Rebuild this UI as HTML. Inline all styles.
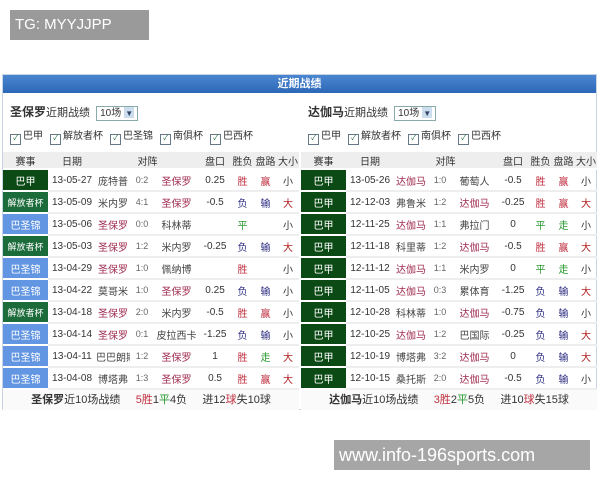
<!DOCTYPE html><html><head><meta charset="utf-8"><style>
*{margin:0;padding:0;box-sizing:border-box}
body{width:600px;height:480px;background:#fff;position:relative;overflow:hidden;font-family:"Liberation Sans","Noto Sans CJK SC",sans-serif;font-size:10px;color:#333}
.tg{position:absolute;left:10px;top:10px;width:139px;height:30px;background:#9a9a9a;color:#fff;font-size:15px;line-height:30px;padding-left:5px}
.wm{position:absolute;left:334px;top:440px;width:256px;height:30px;background:#a6a6a6;color:#fff;font-size:18px;line-height:30px;padding-left:5px}
.panel{position:absolute;left:2px;top:74px;width:595px;height:336px;border:1px solid #c8d4e4;background:#fff}
.bar{height:18px;background:linear-gradient(#4a86d0,#2d68b8);color:#fff;font-weight:bold;text-align:center;font-size:11px;line-height:18px}
.side{position:absolute;top:19px;width:296px}
.t1{height:31px;line-height:36px;padding-left:7px;font-size:11px}
.t1 b{font-size:12px}
.sel{display:inline-block;border:1px solid #8aa;height:15px;line-height:13px;font-size:10px;padding:0 3px;vertical-align:middle;margin-left:3px}
.sel i{display:inline-block;width:10px;height:11px;background:#cde;color:#346;font-style:normal;font-size:8px;text-align:center;margin-left:3px}
.cb{height:27px;line-height:24px;padding-left:7px;font-size:10px}
.cb span{margin-right:7px}
.cb span:before{content:"✓";display:inline-block;width:9px;height:9px;border:1px solid #678;font-size:7px;line-height:8px;text-align:center;color:#163;margin-right:2px;vertical-align:-1px}
table{border-collapse:separate;border-spacing:0;table-layout:fixed;width:296px}
td,th{height:22px;text-align:center;font-weight:normal;white-space:nowrap;overflow:hidden;border-bottom:2px solid #eee}
th{height:18px;background:#eee;border-bottom:2px solid #fff;font-size:10px}
.g{background:#0b4a14;color:#fff;border-bottom:2px solid #fff}
.j{background:#1c6b3a;color:#fff;border-bottom:2px solid #fff;font-size:9px}
.b{background:#6295e2;color:#fff;border-bottom:2px solid #fff}
.h{color:#a02c50}.o{color:#444}.s{color:#666;font-size:9px}
.w{color:#c03040}.l{color:#2a2a80}.d{color:#2a9a30}.big{color:#b02020}
.ft{height:20px;line-height:20px;text-align:center;font-size:11px;background:#fafafa}
</style></head><body>
<div class="tg">TG: MYYJJPP</div>
<div class="panel">
<div class="bar">近期战绩</div>
<div class="side" style="left:0">
<div class="t1"><b>圣保罗</b>近期战绩 <span class="sel">10场<i>▼</i></span></div>
<div class="cb"><span>巴甲</span><span>解放者杯</span><span>巴圣锦</span><span>南俱杯</span><span>巴西杯</span></div>
<table><colgroup><col style="width:45px"><col style="width:48px"><col style="width:34px"><col style="width:24px"><col style="width:45px"><col style="width:32px"><col style="width:23px"><col style="width:23px"><col style="width:22px"></colgroup>
<tr><th>赛事</th><th>日期</th><th colspan="3">对阵</th><th>盘口</th><th>胜负</th><th>盘路</th><th>大小</th></tr>
<tr><td class="g">巴甲</td><td>13-05-27</td><td class="o">庞特普</td><td class="s">0:2</td><td class="h">圣保罗</td><td>0.25</td><td class="w">胜</td><td class="w">赢</td><td>小</td></tr>
<tr><td class="j">解放者杯</td><td>13-05-09</td><td class="o">米内罗</td><td class="s">4:1</td><td class="h">圣保罗</td><td>-0.5</td><td class="l">负</td><td class="l">输</td><td class="big">大</td></tr>
<tr><td class="b">巴圣锦</td><td>13-05-06</td><td class="h">圣保罗</td><td class="s">0:0</td><td class="o">科林蒂</td><td></td><td class="d">平</td><td></td><td>小</td></tr>
<tr><td class="j">解放者杯</td><td>13-05-03</td><td class="h">圣保罗</td><td class="s">1:2</td><td class="o">米内罗</td><td>-0.25</td><td class="l">负</td><td class="l">输</td><td class="big">大</td></tr>
<tr><td class="b">巴圣锦</td><td>13-04-29</td><td class="h">圣保罗</td><td class="s">1:0</td><td class="o">佩纳博</td><td></td><td class="w">胜</td><td></td><td>小</td></tr>
<tr><td class="b">巴圣锦</td><td>13-04-22</td><td class="o">莫哥米</td><td class="s">1:0</td><td class="h">圣保罗</td><td>0.25</td><td class="l">负</td><td class="l">输</td><td>小</td></tr>
<tr><td class="j">解放者杯</td><td>13-04-18</td><td class="h">圣保罗</td><td class="s">2:0</td><td class="o">米内罗</td><td>-0.5</td><td class="w">胜</td><td class="w">赢</td><td>小</td></tr>
<tr><td class="b">巴圣锦</td><td>13-04-14</td><td class="h">圣保罗</td><td class="s">0:1</td><td class="o">皮拉西卡</td><td>-1.25</td><td class="l">负</td><td class="l">输</td><td>小</td></tr>
<tr><td class="b">巴圣锦</td><td>13-04-11</td><td class="o">巴巴朗斯</td><td class="s">1:2</td><td class="h">圣保罗</td><td>1</td><td class="w">胜</td><td class="d">走</td><td class="big">大</td></tr>
<tr><td class="b">巴圣锦</td><td>13-04-08</td><td class="o">博塔弗</td><td class="s">1:3</td><td class="h">圣保罗</td><td>0.5</td><td class="w">胜</td><td class="w">赢</td><td class="big">大</td></tr>
</table>
<div class="ft"><b>圣保罗</b>近10场战绩 &nbsp; &nbsp; <span class="w">5胜</span>1<span class="d">平</span>4负 &nbsp; &nbsp; 进12<span class="w">球</span>失10球</div>
</div>
<div class="side" style="left:298px">
<div class="t1"><b>达伽马</b>近期战绩 <span class="sel">10场<i>▼</i></span></div>
<div class="cb"><span>巴甲</span><span>解放者杯</span><span>南俱杯</span><span>巴西杯</span></div>
<table><colgroup><col style="width:45px"><col style="width:48px"><col style="width:34px"><col style="width:24px"><col style="width:45px"><col style="width:32px"><col style="width:23px"><col style="width:23px"><col style="width:22px"></colgroup>
<tr><th>赛事</th><th>日期</th><th colspan="3">对阵</th><th>盘口</th><th>胜负</th><th>盘路</th><th>大小</th></tr>
<tr><td class="g">巴甲</td><td>13-05-26</td><td class="h">达伽马</td><td class="s">1:0</td><td class="o">葡萄人</td><td>-0.5</td><td class="w">胜</td><td class="w">赢</td><td>小</td></tr>
<tr><td class="g">巴甲</td><td>12-12-03</td><td class="o">弗鲁米</td><td class="s">1:2</td><td class="h">达伽马</td><td>-0.25</td><td class="w">胜</td><td class="w">赢</td><td class="big">大</td></tr>
<tr><td class="g">巴甲</td><td>12-11-25</td><td class="h">达伽马</td><td class="s">1:1</td><td class="o">弗拉门</td><td>0</td><td class="d">平</td><td class="d">走</td><td>小</td></tr>
<tr><td class="g">巴甲</td><td>12-11-18</td><td class="o">科里蒂</td><td class="s">1:2</td><td class="h">达伽马</td><td>-0.5</td><td class="w">胜</td><td class="w">赢</td><td class="big">大</td></tr>
<tr><td class="g">巴甲</td><td>12-11-12</td><td class="h">达伽马</td><td class="s">1:1</td><td class="o">米内罗</td><td>0</td><td class="d">平</td><td class="d">走</td><td>小</td></tr>
<tr><td class="g">巴甲</td><td>12-11-05</td><td class="h">达伽马</td><td class="s">0:3</td><td class="o">累体育</td><td>-1.25</td><td class="l">负</td><td class="l">输</td><td class="big">大</td></tr>
<tr><td class="g">巴甲</td><td>12-10-28</td><td class="o">科林蒂</td><td class="s">1:0</td><td class="h">达伽马</td><td>-0.75</td><td class="l">负</td><td class="l">输</td><td>小</td></tr>
<tr><td class="g">巴甲</td><td>12-10-25</td><td class="h">达伽马</td><td class="s">1:2</td><td class="o">巴国际</td><td>-0.25</td><td class="l">负</td><td class="l">输</td><td class="big">大</td></tr>
<tr><td class="g">巴甲</td><td>12-10-19</td><td class="o">博塔弗</td><td class="s">3:2</td><td class="h">达伽马</td><td>0</td><td class="l">负</td><td class="l">输</td><td class="big">大</td></tr>
<tr><td class="g">巴甲</td><td>12-10-15</td><td class="o">桑托斯</td><td class="s">2:0</td><td class="h">达伽马</td><td>-0.5</td><td class="l">负</td><td class="l">输</td><td>小</td></tr>
</table>
<div class="ft"><b>达伽马</b>近10场战绩 &nbsp; &nbsp; <span class="w">3胜</span>2<span class="d">平</span>5负 &nbsp; &nbsp; 进10<span class="w">球</span>失15球</div>
</div>
</div>
<div class="wm">www.info-196sports.com</div>
</body></html>
